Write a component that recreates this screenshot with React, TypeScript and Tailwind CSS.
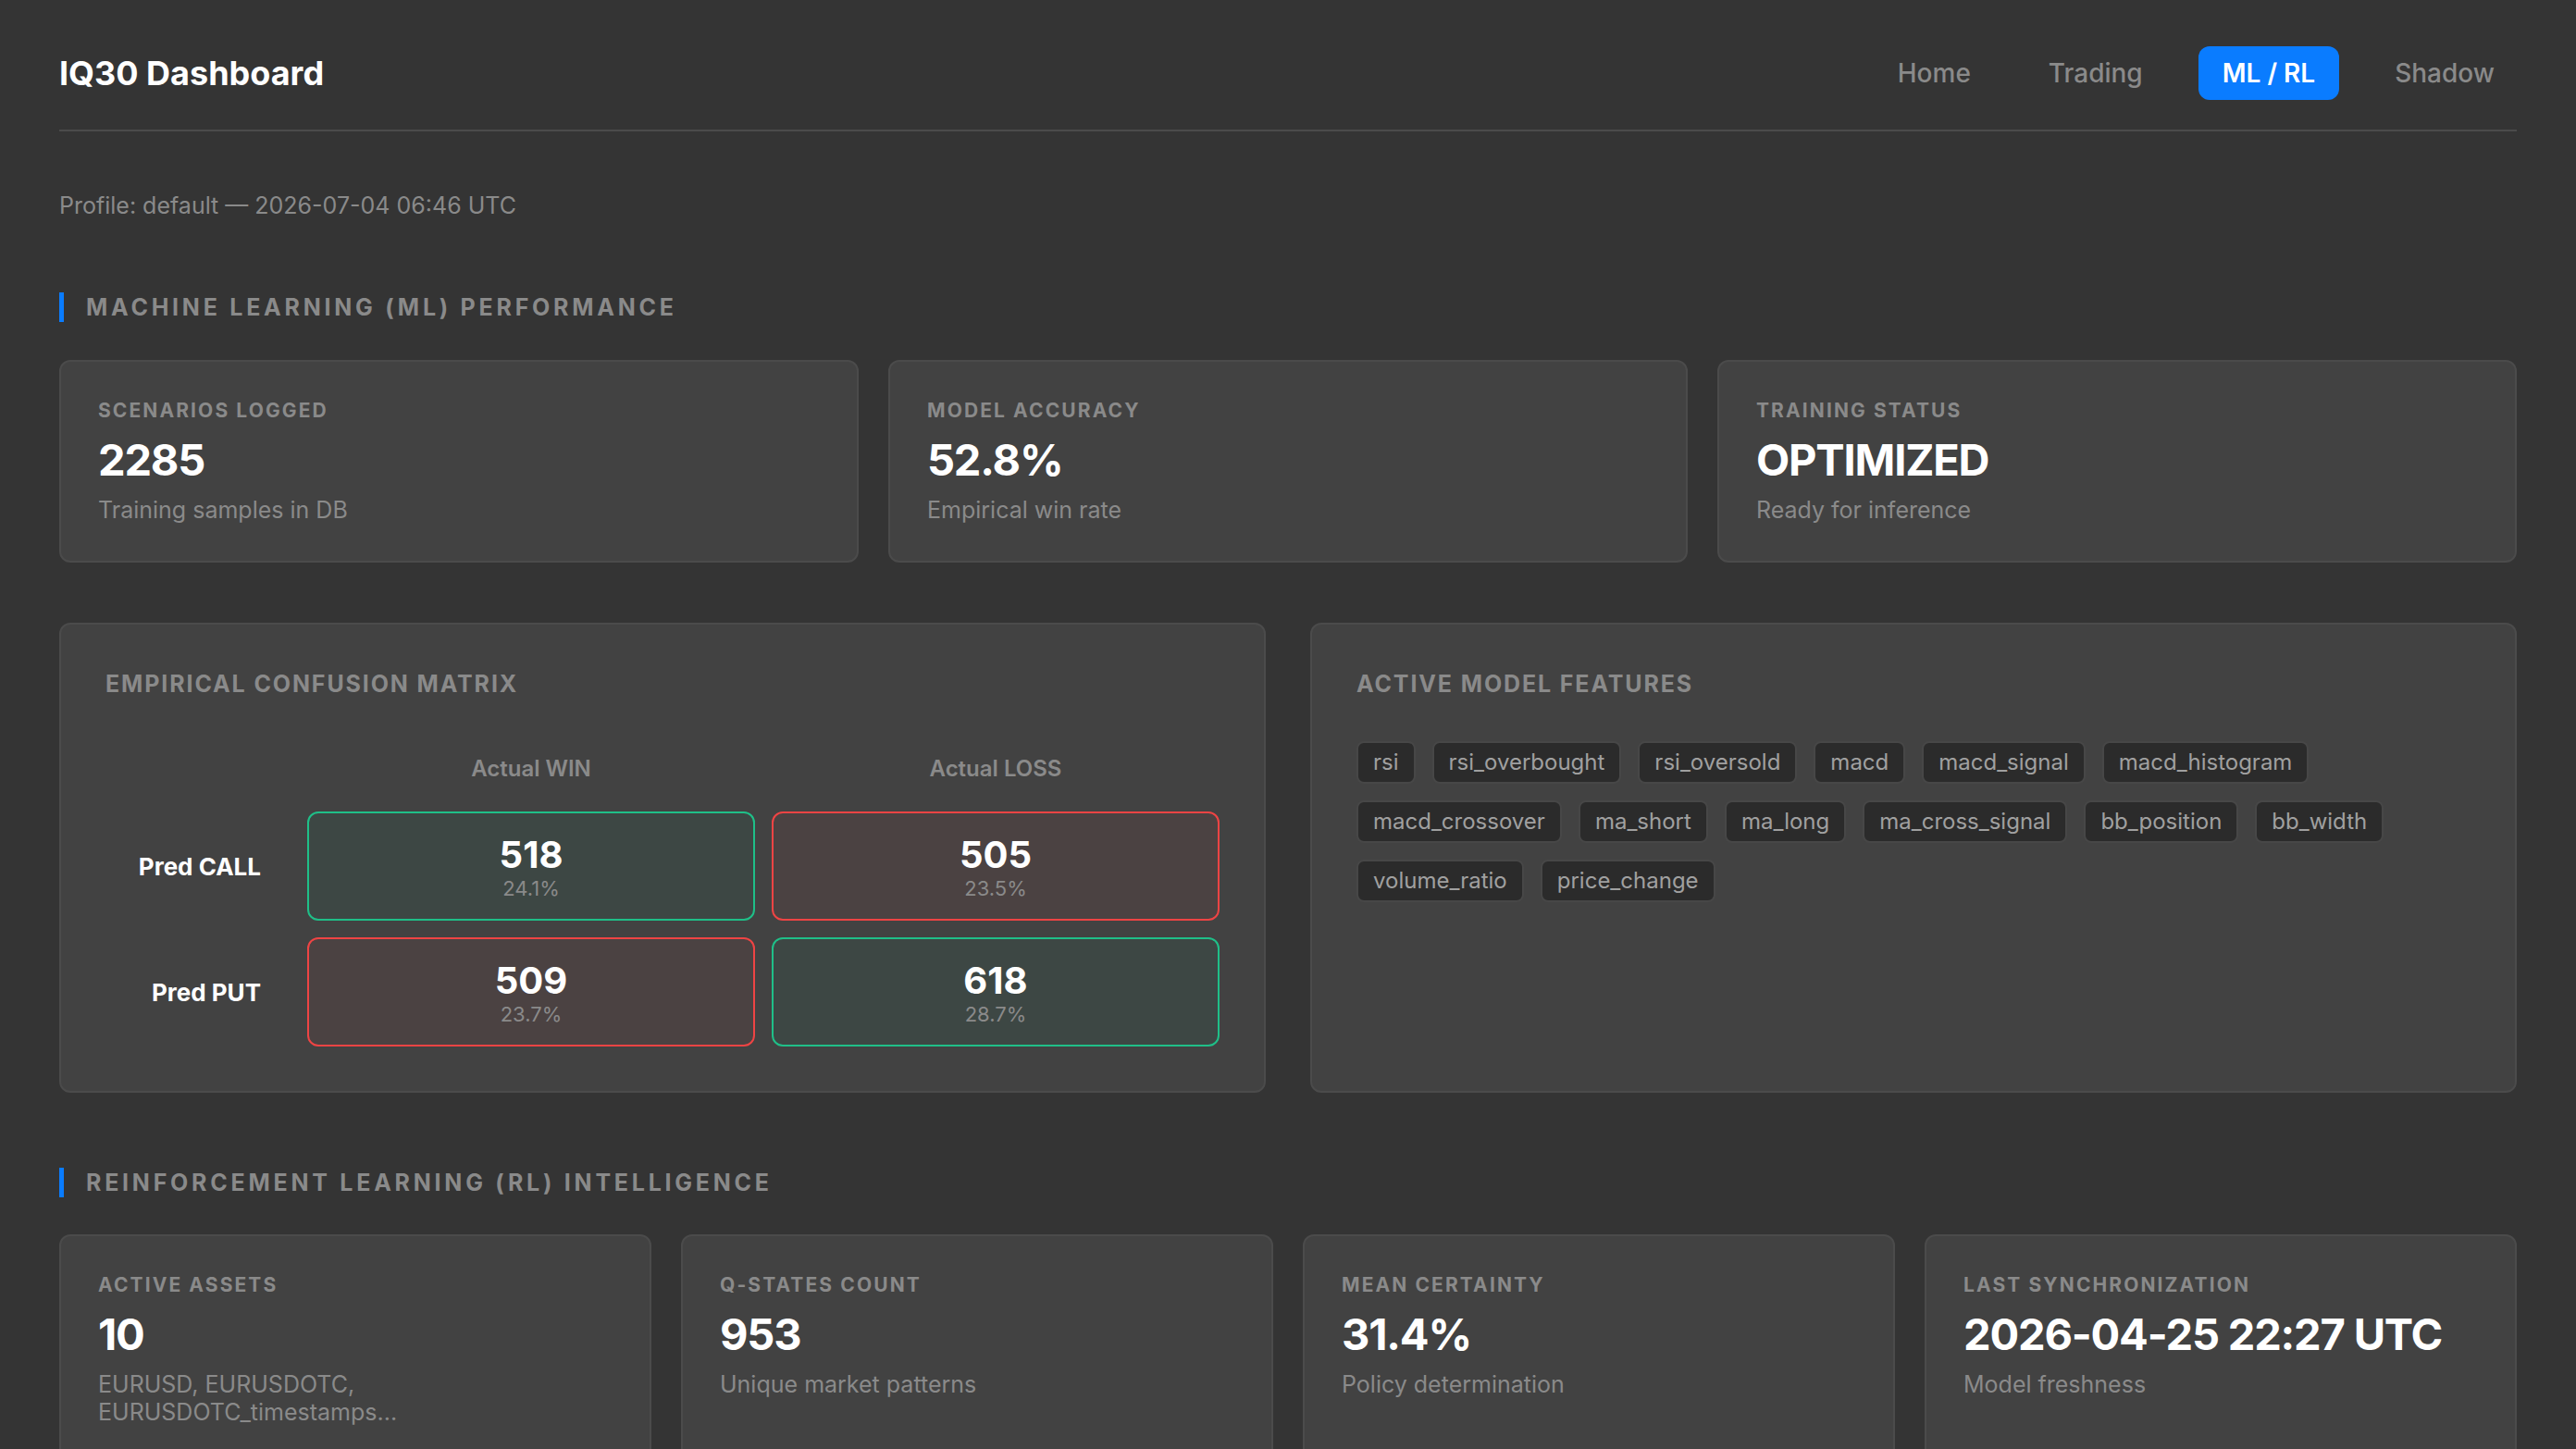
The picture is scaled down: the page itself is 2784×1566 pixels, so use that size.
const navItems = ["Home", "Trading", "ML / RL", "Shadow"];

const mlCards = [
  { label: "Scenarios Logged", value: "2285", sub: "Training samples in DB" },
  { label: "Model Accuracy", value: "52.8%", sub: "Empirical win rate" },
  { label: "Training Status", value: "OPTIMIZED", sub: "Ready for inference" },
];

const rlCards = [
  { label: "Active Assets", value: "10", sub: "EURUSD, EURUSDOTC, EURUSDOTC_timestamps..." },
  { label: "Q-States Count", value: "953", sub: "Unique market patterns" },
  { label: "Mean Certainty", value: "31.4%", sub: "Policy determination" },
  { label: "Last Synchronization", value: "2026-04-25 22:27 UTC", sub: "Model freshness" },
];

const features = [
  "rsi",
  "rsi_overbought",
  "rsi_oversold",
  "macd",
  "macd_signal",
  "macd_histogram",
  "macd_crossover",
  "ma_short",
  "ma_long",
  "ma_cross_signal",
  "bb_position",
  "bb_width",
  "volume_ratio",
  "price_change",
];

const matrix = [
  {
    label: "Pred CALL",
    cells: [
      { n: 518, pct: "24.1%", good: true },
      { n: 505, pct: "23.5%", good: false },
    ],
  },
  {
    label: "Pred PUT",
    cells: [
      { n: 509, pct: "23.7%", good: false },
      { n: 618, pct: "28.7%", good: true },
    ],
  },
];

function SectionHeading({ children }: { children: string }) {
  return (
    <div className="flex items-center h-8 border-l-[5px] border-[#0a7cff] pl-6">
      <h2 className="text-[25px] leading-8 font-bold uppercase tracking-[0.15em] text-[#8a8a8a]">
        {children}
      </h2>
    </div>
  );
}

function StatCard({ label, value, sub }: { label: string; value: string; sub: string }) {
  return (
    <div className="rounded-xl border-2 border-[#4b4b4b] bg-[#424242] px-10 pt-10 pb-10">
      <div className="text-[21px] leading-[26px] font-bold uppercase tracking-[0.1em] text-[#8a8a8a]">
        {label}
      </div>
      <div className="mt-3 text-[47px] leading-[56px] font-bold tracking-tight text-white">
        {value}
      </div>
      <div className="mt-[11px] text-[25px] leading-[30px] text-[#8a8a8a]">{sub}</div>
    </div>
  );
}

export default function App() {
  return (
    <div
      className="min-h-screen bg-[#343434] px-16 pt-[50px] pb-16"
      style={{ fontFamily: "Inter, 'Noto Sans', sans-serif" }}
    >
      <header className="flex items-center justify-between border-b-2 border-[#4b4b4b] pb-8">
        <h1 className="text-[36px] font-bold text-white">IQ30 Dashboard</h1>
        <nav className="flex items-center gap-9">
          {navItems.map((item) =>
            item === "ML / RL" ? (
              <span
                key={item}
                className="rounded-xl bg-[#0a7cff] px-[26px] py-3 text-[28px] leading-[34px] font-semibold text-white"
              >
                {item}
              </span>
            ) : (
              <span
                key={item}
                className="px-6 py-3 text-[28px] leading-[34px] font-medium text-[#8a8a8a]"
              >
                {item}
              </span>
            )
          )}
        </nav>
      </header>

      <p className="mt-16 text-[25px] leading-8 text-[#8a8a8a]">
        Profile: default — 2026-07-04 06:46 UTC
      </p>

      <div className="mt-[78px]">
        <SectionHeading>Machine Learning (ML) Performance</SectionHeading>
      </div>

      <div className="mt-[41px] grid grid-cols-3 gap-8">
        {mlCards.map((c) => (
          <StatCard key={c.label} {...c} />
        ))}
      </div>

      <div className="mt-[65px] grid grid-cols-2 gap-12">
        <div className="rounded-xl border-2 border-[#4b4b4b] bg-[#424242] p-12">
          <h3 className="text-[25px] leading-8 font-bold uppercase tracking-[0.075em] text-[#8a8a8a]">
            Empirical Confusion Matrix
          </h3>
          <div className="mt-[61px] grid grid-cols-[200px_1fr_1fr] gap-x-[18px] gap-y-[18px]">
            <div className="mb-[13px]" />
            <div className="mb-[13px] text-center text-[24px] leading-[30px] font-semibold text-[#8a8a8a]">
              Actual WIN
            </div>
            <div className="mb-[13px] text-center text-[24px] leading-[30px] font-semibold text-[#8a8a8a]">
              Actual LOSS
            </div>
            {matrix.map((row) => (
              <div key={row.label} className="contents">
                <div className="flex items-center justify-end pr-8 text-[26px] font-bold text-white">
                  {row.label}
                </div>
                {row.cells.map((cell) => (
                  <div
                    key={cell.n}
                    className={
                      cell.good
                        ? "rounded-xl border-2 border-[#1fbf88] bg-[#3d4744] pt-[22px] pb-5 text-center"
                        : "rounded-xl border-2 border-[#ee4444] bg-[#4b4242] pt-[22px] pb-5 text-center"
                    }
                  >
                    <div className="text-[40px] leading-[46px] font-bold text-white">{cell.n}</div>
                    <div className="text-[22px] leading-[26px] text-[#8a8a8a]">{cell.pct}</div>
                  </div>
                ))}
              </div>
            ))}
          </div>
        </div>

        <div className="rounded-xl border-2 border-[#4b4b4b] bg-[#424242] p-12">
          <h3 className="text-[25px] leading-8 font-bold uppercase tracking-[0.075em] text-[#8a8a8a]">
            Active Model Features
          </h3>
          <div className="mt-[46px] flex flex-wrap gap-x-[18px] gap-y-[18px]">
            {features.map((f) => (
              <span
                key={f}
                className="rounded-lg border-2 border-[#474747] bg-[#2b2b2b] px-4 py-[6px] text-[24px] leading-[30px] text-[#a0a0a0]"
              >
                {f}
              </span>
            ))}
          </div>
        </div>
      </div>

      <div className="mt-[81px]">
        <SectionHeading>Reinforcement Learning (RL) Intelligence</SectionHeading>
      </div>

      <div className="mt-[40px] grid grid-cols-4 gap-8">
        {rlCards.map((c) => (
          <StatCard key={c.label} {...c} />
        ))}
      </div>
    </div>
  );
}
